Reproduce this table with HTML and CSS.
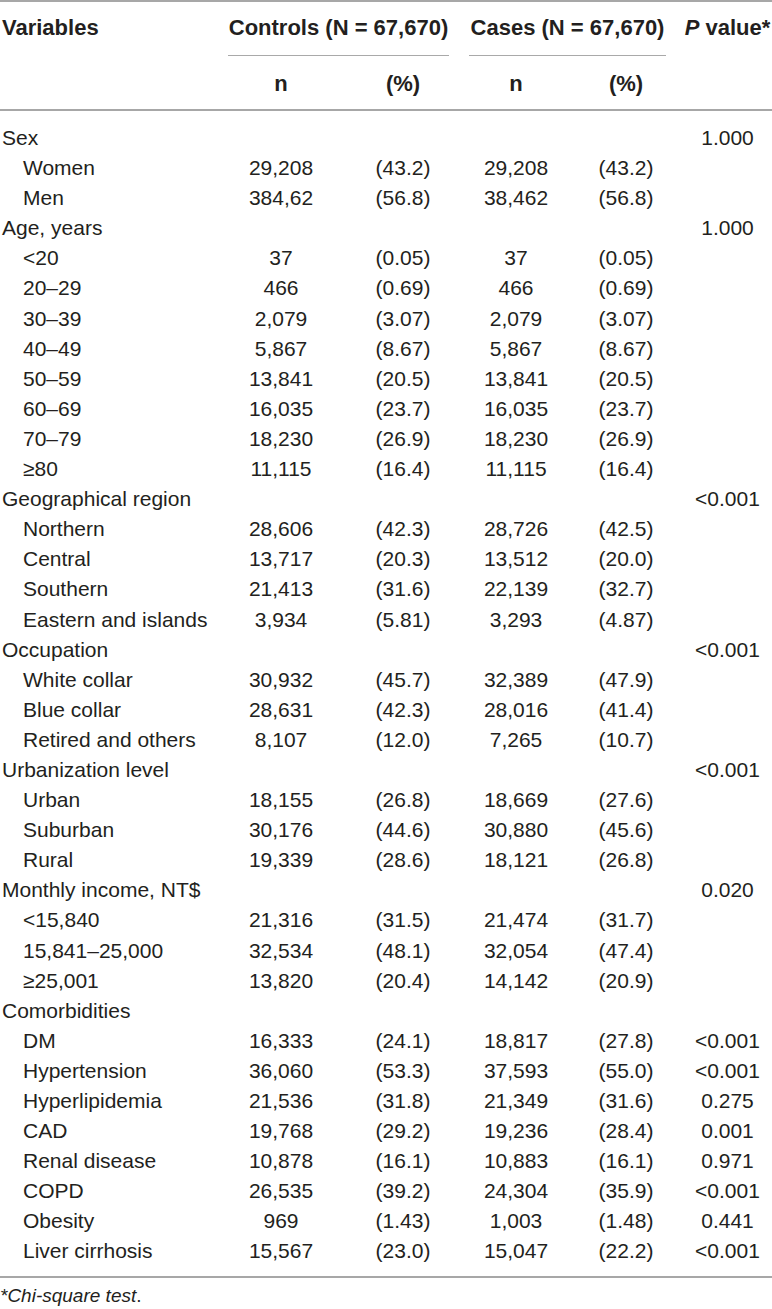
FILE: index.html
```html
<!DOCTYPE html>
<html lang="en">
<head>
    <meta charset="UTF-8">
    <meta name="viewport" content="width=device-width, initial-scale=1.0">
    <title>Baseline characteristics</title>
    <link rel="stylesheet" href="styles.css">
</head>
<body>
    <div class="table-wrap">
        <table class="data-table">
            <colgroup>
                <col class="col-var">
                <col class="col-ctrl-n">
                <col class="col-ctrl-pct">
                <col class="col-case-n">
                <col class="col-case-pct">
                <col class="col-p">
            </colgroup>
            <thead>
                <tr>
                    <th rowspan="2" class="th-var">Variables</th>
                    <th colspan="2" class="th-group"><div class="group-line ctrl">Controls (N = 67,670)</div></th>
                    <th colspan="2" class="th-group"><div class="group-line cases">Cases (N = 67,670)</div></th>
                    <th rowspan="2" class="th-p"><em>P</em> value*</th>
                </tr>
                <tr class="sub-head">
                    <th>n</th>
                    <th>(%)</th>
                    <th>n</th>
                    <th>(%)</th>
                </tr>
            </thead>
            <tbody>
                <tr class="first-row"><td class="group">Sex</td><td></td><td></td><td></td><td></td><td>1.000</td></tr>
                <tr><td class="item">Women</td><td>29,208</td><td>(43.2)</td><td>29,208</td><td>(43.2)</td><td></td></tr>
                <tr><td class="item">Men</td><td>384,62</td><td>(56.8)</td><td>38,462</td><td>(56.8)</td><td></td></tr>
                <tr><td class="group">Age, years</td><td></td><td></td><td></td><td></td><td>1.000</td></tr>
                <tr><td class="item">&lt;20</td><td>37</td><td>(0.05)</td><td>37</td><td>(0.05)</td><td></td></tr>
                <tr><td class="item">20–29</td><td>466</td><td>(0.69)</td><td>466</td><td>(0.69)</td><td></td></tr>
                <tr><td class="item">30–39</td><td>2,079</td><td>(3.07)</td><td>2,079</td><td>(3.07)</td><td></td></tr>
                <tr><td class="item">40–49</td><td>5,867</td><td>(8.67)</td><td>5,867</td><td>(8.67)</td><td></td></tr>
                <tr><td class="item">50–59</td><td>13,841</td><td>(20.5)</td><td>13,841</td><td>(20.5)</td><td></td></tr>
                <tr><td class="item">60–69</td><td>16,035</td><td>(23.7)</td><td>16,035</td><td>(23.7)</td><td></td></tr>
                <tr><td class="item">70–79</td><td>18,230</td><td>(26.9)</td><td>18,230</td><td>(26.9)</td><td></td></tr>
                <tr><td class="item">≥80</td><td>11,115</td><td>(16.4)</td><td>11,115</td><td>(16.4)</td><td></td></tr>
                <tr><td class="group">Geographical region</td><td></td><td></td><td></td><td></td><td>&lt;0.001</td></tr>
                <tr><td class="item">Northern</td><td>28,606</td><td>(42.3)</td><td>28,726</td><td>(42.5)</td><td></td></tr>
                <tr><td class="item">Central</td><td>13,717</td><td>(20.3)</td><td>13,512</td><td>(20.0)</td><td></td></tr>
                <tr><td class="item">Southern</td><td>21,413</td><td>(31.6)</td><td>22,139</td><td>(32.7)</td><td></td></tr>
                <tr><td class="item">Eastern and islands</td><td>3,934</td><td>(5.81)</td><td>3,293</td><td>(4.87)</td><td></td></tr>
                <tr><td class="group">Occupation</td><td></td><td></td><td></td><td></td><td>&lt;0.001</td></tr>
                <tr><td class="item">White collar</td><td>30,932</td><td>(45.7)</td><td>32,389</td><td>(47.9)</td><td></td></tr>
                <tr><td class="item">Blue collar</td><td>28,631</td><td>(42.3)</td><td>28,016</td><td>(41.4)</td><td></td></tr>
                <tr><td class="item">Retired and others</td><td>8,107</td><td>(12.0)</td><td>7,265</td><td>(10.7)</td><td></td></tr>
                <tr><td class="group">Urbanization level</td><td></td><td></td><td></td><td></td><td>&lt;0.001</td></tr>
                <tr><td class="item">Urban</td><td>18,155</td><td>(26.8)</td><td>18,669</td><td>(27.6)</td><td></td></tr>
                <tr><td class="item">Suburban</td><td>30,176</td><td>(44.6)</td><td>30,880</td><td>(45.6)</td><td></td></tr>
                <tr><td class="item">Rural</td><td>19,339</td><td>(28.6)</td><td>18,121</td><td>(26.8)</td><td></td></tr>
                <tr><td class="group">Monthly income, NT$</td><td></td><td></td><td></td><td></td><td>0.020</td></tr>
                <tr><td class="item">&lt;15,840</td><td>21,316</td><td>(31.5)</td><td>21,474</td><td>(31.7)</td><td></td></tr>
                <tr><td class="item">15,841–25,000</td><td>32,534</td><td>(48.1)</td><td>32,054</td><td>(47.4)</td><td></td></tr>
                <tr><td class="item">≥25,001</td><td>13,820</td><td>(20.4)</td><td>14,142</td><td>(20.9)</td><td></td></tr>
                <tr><td class="group">Comorbidities</td><td></td><td></td><td></td><td></td><td></td></tr>
                <tr><td class="item">DM</td><td>16,333</td><td>(24.1)</td><td>18,817</td><td>(27.8)</td><td>&lt;0.001</td></tr>
                <tr><td class="item">Hypertension</td><td>36,060</td><td>(53.3)</td><td>37,593</td><td>(55.0)</td><td>&lt;0.001</td></tr>
                <tr><td class="item">Hyperlipidemia</td><td>21,536</td><td>(31.8)</td><td>21,349</td><td>(31.6)</td><td>0.275</td></tr>
                <tr><td class="item">CAD</td><td>19,768</td><td>(29.2)</td><td>19,236</td><td>(28.4)</td><td>0.001</td></tr>
                <tr><td class="item">Renal disease</td><td>10,878</td><td>(16.1)</td><td>10,883</td><td>(16.1)</td><td>0.971</td></tr>
                <tr><td class="item">COPD</td><td>26,535</td><td>(39.2)</td><td>24,304</td><td>(35.9)</td><td>&lt;0.001</td></tr>
                <tr><td class="item">Obesity</td><td>969</td><td>(1.43)</td><td>1,003</td><td>(1.48)</td><td>0.441</td></tr>
                <tr class="last-row"><td class="item">Liver cirrhosis</td><td>15,567</td><td>(23.0)</td><td>15,047</td><td>(22.2)</td><td>&lt;0.001</td></tr>
            </tbody>
        </table>
    </div>
    <p class="footnote"><em>*Chi-square test</em>.</p>
</body>
</html>
```

FILE: styles.css
```css
body {
    margin: 0;
    font-family: "Liberation Sans", Arial, sans-serif;
    color: #231f20;
    background-color: #fff;
    width: 772px;
}
.table-wrap {
    border-top: 2px solid #a7a7a7;
    border-bottom: 2px solid #a7a7a7;
}
.data-table {
    width: 772px;
    table-layout: fixed;
    border-collapse: separate;
    border-spacing: 0;
}
.col-var { width: 219px; }
.col-ctrl-n { width: 124px; }
.col-ctrl-pct { width: 120px; }
.col-case-n { width: 106px; }
.col-case-pct { width: 114px; }
.col-p { width: 89px; }

th {
    font-size: 22px;
    font-weight: bold;
    line-height: 30px;
    text-align: center;
    padding: 0;
    white-space: nowrap;
}
thead th {
    vertical-align: top;
}
.th-var {
    text-align: left;
    padding: 11px 0 0 2px;
    border-bottom: 2px solid #a7a7a7;
}
.th-p {
    padding-top: 11px;
    border-bottom: 2px solid #a7a7a7;
}
.th-group {
    padding-top: 11px;
    text-align: left;
}
.group-line {
    padding-bottom: 12px;
    border-bottom: 1px solid #a9a9a9;
    text-align: center;
}
.group-line.ctrl {
    margin: 0 14px 0 9px;
}
.group-line.cases {
    margin: 0 17px 0 6px;
}
.sub-head th {
    padding: 13px 0 10px;
    border-bottom: 2px solid #a7a7a7;
}

td {
    font-size: 21px;
    line-height: 30.1px;
    padding: 0;
    text-align: center;
    white-space: nowrap;
}
td.group {
    text-align: left;
    padding-left: 2px;
}
td.item {
    text-align: left;
    padding-left: 23px;
}
.first-row td {
    padding-top: 12px;
}
.last-row td {
    padding-bottom: 9px;
}

.footnote {
    margin: 7px 0 0;
    font-size: 19px;
    line-height: 22px;
}
```
